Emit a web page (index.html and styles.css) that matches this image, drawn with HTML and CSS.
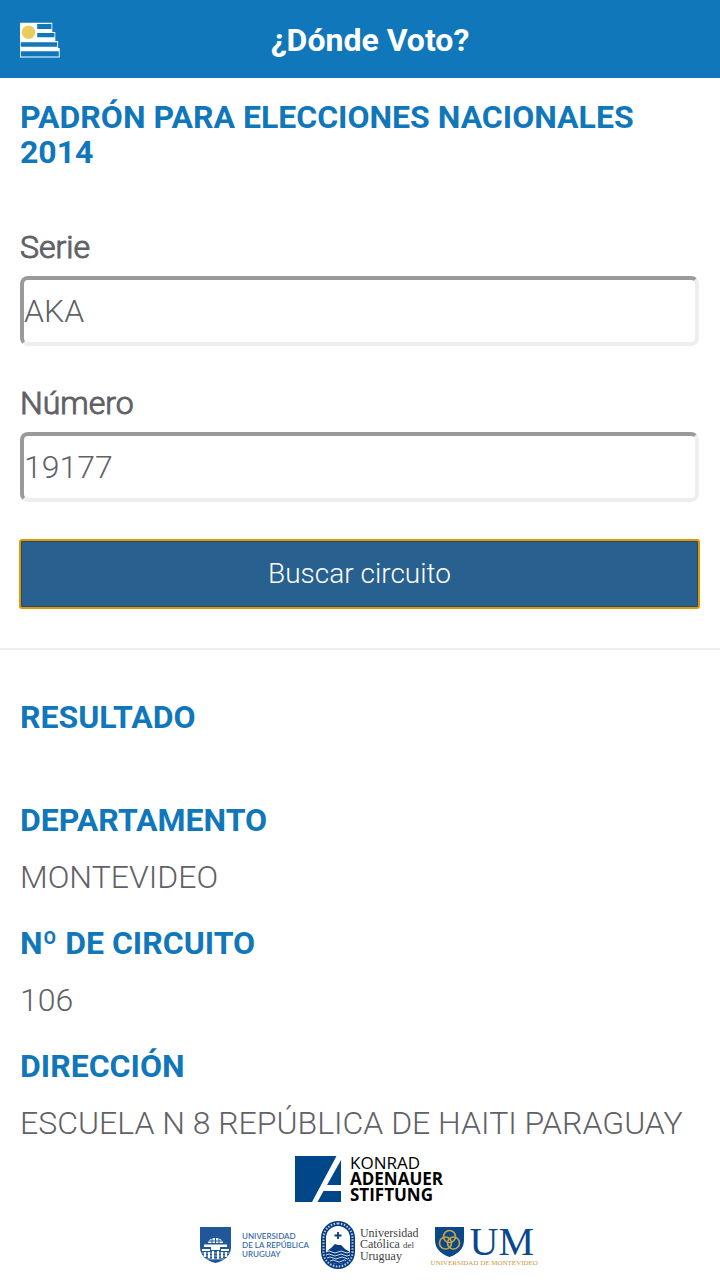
FILE: index.html
```html
<!DOCTYPE html>
<html lang="es">
<head>
<meta charset="utf-8">
<meta name="viewport" content="width=device-width, initial-scale=1">
<title>¿Dónde Voto?</title>
<link rel="stylesheet" href="styles.css">
</head>
<body>
<header class="topbar">
  <svg class="flag" viewBox="0 0 40 36" aria-hidden="true">
    <path fill="#fff" d="M0 .7h32.300v9.300h3v9h2.800v7H39.700v9.400H0z"/>
    <path fill="#1077bb" d="M17.200 2h14.300v5H17.200zM17.200 11h17.300v4.300H17.200zM.8 20.200h36.400v4.600H.8zM.8 29.200h38v5.200h-38z"/>
    <circle cx="8.500" cy="10.200" r="6.800" fill="#e8cd5c"/>
  </svg>
  <h1 class="title">¿Dónde Voto?</h1>
</header>
<main>
  <form class="search">
    <h2 class="heading">PADRÓN PARA ELECCIONES NACIONALES 2014</h2>
    <div class="field">
      <label class="label" for="serie">Serie</label>
      <input class="input" id="serie" type="text" value="AKA">
    </div>
    <div class="field">
      <label class="label" for="numero">Número</label>
      <input class="input" id="numero" type="text" value="19177">
    </div>
    <button class="button" type="button">Buscar circuito</button>
  </form>
  <section class="result">
    <h2 class="heading">RESULTADO</h2>
    <dl class="data">
      <dt class="heading">DEPARTAMENTO</dt>
      <dd class="value">MONTEVIDEO</dd>
      <dt class="heading">Nº DE CIRCUITO</dt>
      <dd class="value">106</dd>
      <dt class="heading">DIRECCIÓN</dt>
      <dd class="value">ESCUELA N 8 REPÚBLICA DE HAITI PARAGUAY</dd>
    </dl>
  </section>
</main>
<footer class="sponsors">
  <div class="logo logo-kas">
    <svg width="46" height="46" viewBox="0 0 46 46" aria-hidden="true">
      <path fill="#00478a" d="M0 0h41.500L17 46H0zM46 4v25H32zM28.500 35H46v11H22.500z"/>
    </svg>
    <p class="kas"><span class="kas-light">KONRAD</span><br>ADENAUER<br>STIFTUNG</p>
  </div>
  <div class="logos">
    <div class="logo logo-udelar">
      <svg width="31" height="36" viewBox="0 0 31 36" aria-hidden="true">
        <path fill="#1f5799" d="M0 0h31v20q0 12-15.500 16Q0 32 0 20z"/>
        <path fill="#fff" d="M8 16q1-5 7.500-5t7.500 5z"/>
        <path fill="none" stroke="#1f5799" d="M9 14h13M12 11v5M15.500 11v5M19 11v5"/>
        <path fill="#fff" d="M4 17.500h23V20H4zM2 22h8v2H2zM21 22h8v2h-8zM11 20h9v3h-9zM4 25h2v5H4zM8 25h2v6H8zM12 24h2v8h-2zM17 24h2v8h-2zM21 25h2v6h-2zM25 25h2v5h-2z"/>
        <path fill="none" stroke="#fff" stroke-width=".6" d="M0 26h31M2 29h27M5 32h21"/>
      </svg>
      <p class="udelar">UNIVERSIDAD<br>DE LA REPÚBLICA<br>URUGUAY</p>
    </div>
    <div class="logo logo-ucu">
      <svg width="34" height="48" viewBox="0 0 34 48" aria-hidden="true">
        <rect width="34" height="48" rx="17" fill="#083c82"/>
        <rect x="2.500" y="2.500" width="29" height="43" rx="14.500" fill="none" stroke="#b9cbe2" stroke-width="2" stroke-dasharray="1.500 1.500"/>
        <rect x="5" y="5" width="24" height="38" rx="12" fill="#fff"/>
        <path stroke="#083c82" stroke-width="1.800" d="M17 11v7M13.500 14.500h7"/>
        <path fill="#083c82" d="M5 31l5-4 4-4 3 1 3 0 4 4 5 3q0 12-12 12T5 31z"/>
        <path fill="none" stroke="#fff" stroke-width=".8" d="M5 31q3-2 6 0t6 0 6 0 6 0M5 34q3-2 6 0t6 0 6 0 6 0M6 37q3-2 6 0t6 0 6 0 4 0M9 40q3-2 6 0t6 0 4 0"/>
      </svg>
      <p class="ucu">Universidad<br>Católica <small class="ucu-small">del</small><br>Uruguay</p>
    </div>
    <div class="logo-um">
      <div class="um-top">
        <svg width="29" height="30" viewBox="0 0 29 30" aria-hidden="true">
          <path fill="#0b488b" d="M0 0h29v13q0 12-14.500 17Q0 25 0 13z"/>
          <g fill="none" stroke="#c6a344" stroke-width="1.700"><circle cx="14.500" cy="9.500" r="6"/><circle cx="10.500" cy="16" r="6"/><circle cx="18.500" cy="16" r="6"/></g>
        </svg>
        <span class="um">UM</span>
      </div>
      <p class="um-name">UNIVERSIDAD DE MONTEVIDEO</p>
    </div>
  </div>
</footer>
</body>
</html>
```
FILE: styles.css
```css
* { box-sizing: border-box; }
body {
  margin: 0;
  background: #fff;
  color: #5f6166;
  font-family: Roboto, "Liberation Sans", sans-serif;
  font-size: 32px;
  font-weight: 300;
  line-height: 36px;
}
h1, h2, p, dl, dd { margin: 0; }
.topbar {
  display: flex;
  align-items: center;
  height: 78px;
  padding: 2px 40px 0 20px;
  background: #1077bb;
  color: #fff;
}
.flag { width: 40px; height: 36px; }
.title {
  flex: 1;
  font-size: 32px;
  font-weight: 700;
  text-align: center;
}
.heading {
  color: #1077bb;
  font-size: 32px;
  font-weight: 700;
  line-height: 35px;
}
.search {
  display: flex;
  flex-direction: column;
  padding: 22px 21px 39px 20px;
  border-bottom: 2px solid #eee;
}
.search .heading { margin-bottom: 58px; }
.field { margin-bottom: 37px; }
.field + .field { margin-top: 1px; }
.label {
  display: block;
  margin-bottom: 10px;
  line-height: 38px;
  -webkit-text-stroke: 1px #5f6166;
}
.input {
  display: block;
  width: 100%;
  height: 70px;
  padding: 0;
  border: 4px solid;
  border-color: #9a9a9a #eee #eee #9a9a9a;
  border-radius: 8px;
  background: #fff;
  color: #5f6166;
  font: inherit;
}
.button {
  height: 70px;
  margin: 0 -1px;
  padding: 0;
  border: 2px solid #e59700;
  border-radius: 3px;
  box-shadow: inset 0 0 0 1px #204d74;
  background: #286090;
  color: #fff;
  font: inherit;
  font-size: 28px;
}
.result { padding: 50px 20px 0; }
.data { margin-top: 68px; }
.value { padding: 22px 0 31px; line-height: 35px; }
.value:last-child { padding-bottom: 0; }
.sponsors {
  display: flex;
  flex-direction: column;
  align-items: center;
  gap: 18px;
  padding: 14px 0 8px 18px;
}
.logos { display: flex; align-items: center; gap: 12px; }
.logo { display: flex; align-items: center; }
.logo-kas { gap: 9px; }
.logo-udelar { gap: 11px; }
.logo-ucu { gap: 5px; }
.kas {
  color: #000;
  font: 700 17px/16px "Open Sans", sans-serif;
}
.kas-light { font-weight: 400; }
.udelar {
  color: #2d629f;
  font: 500 8px/9px Lato, sans-serif;
}
.ucu {
  color: #3f3f3f;
  font: 12px/11px "Liberation Serif", serif;
}
.ucu-small { font-size: 9px; }
.logo-um {
  display: flex;
  flex-direction: column;
  align-items: center;
  padding-top: 4px;
}
.um-top { display: flex; align-items: center; gap: 6px; height: 32px; }
.um {
  color: #0b488b;
  font: 40px/32px "Liberation Serif", serif;
}
.um-name {
  color: #c59a3e;
  font: 7px/10px "Liberation Serif", serif;
}
```
